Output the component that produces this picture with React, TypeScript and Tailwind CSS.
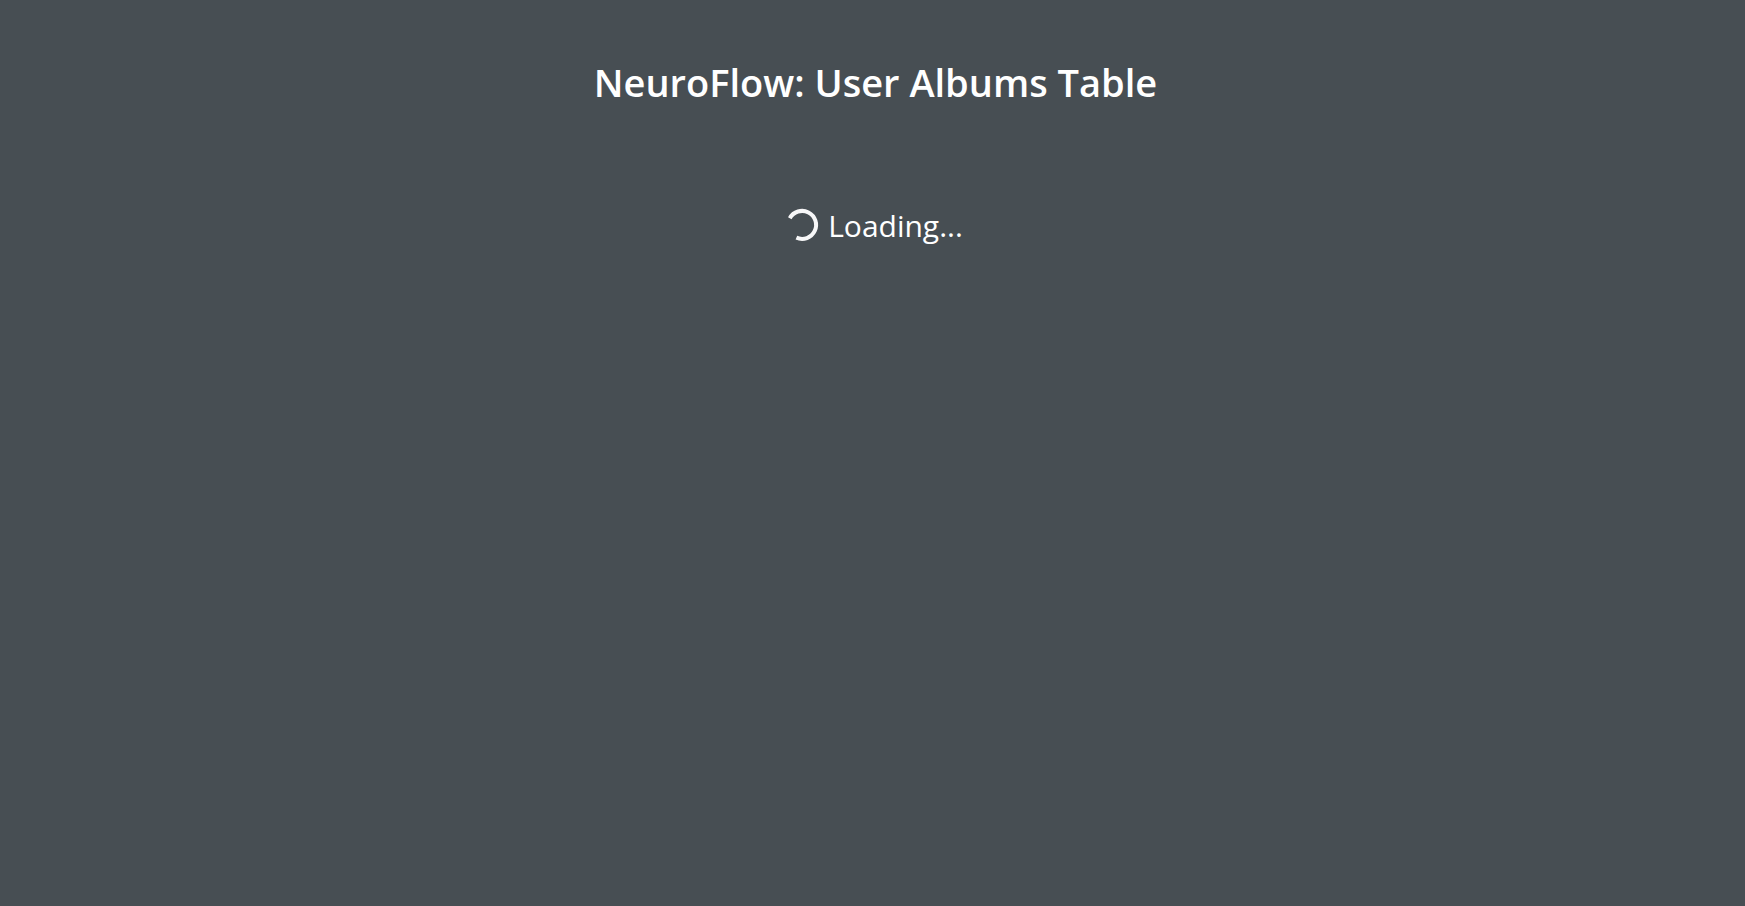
export default function App() {
  return (
    <main className="flex min-h-screen flex-col items-center bg-[#474e53] pt-[54px] pl-1.5 font-['Open_Sans',sans-serif] text-white">
      <h1 className="text-[38px] leading-[56px] font-semibold">NeuroFlow: User Albums Table</h1>
      <div role="status" className="mt-[92px] flex items-center gap-2 text-[30px] leading-[48px]">
        <svg className="size-8 overflow-visible text-[#f7f7f8]" viewBox="0 0 32 32" fill="none" stroke="currentColor" strokeWidth="4" aria-hidden="true">
          <path d="M1.8 8.2A14 14 0 1 1 8.4 27.7" />
        </svg>
        <span>Loading...</span>
      </div>
    </main>
  );
}
